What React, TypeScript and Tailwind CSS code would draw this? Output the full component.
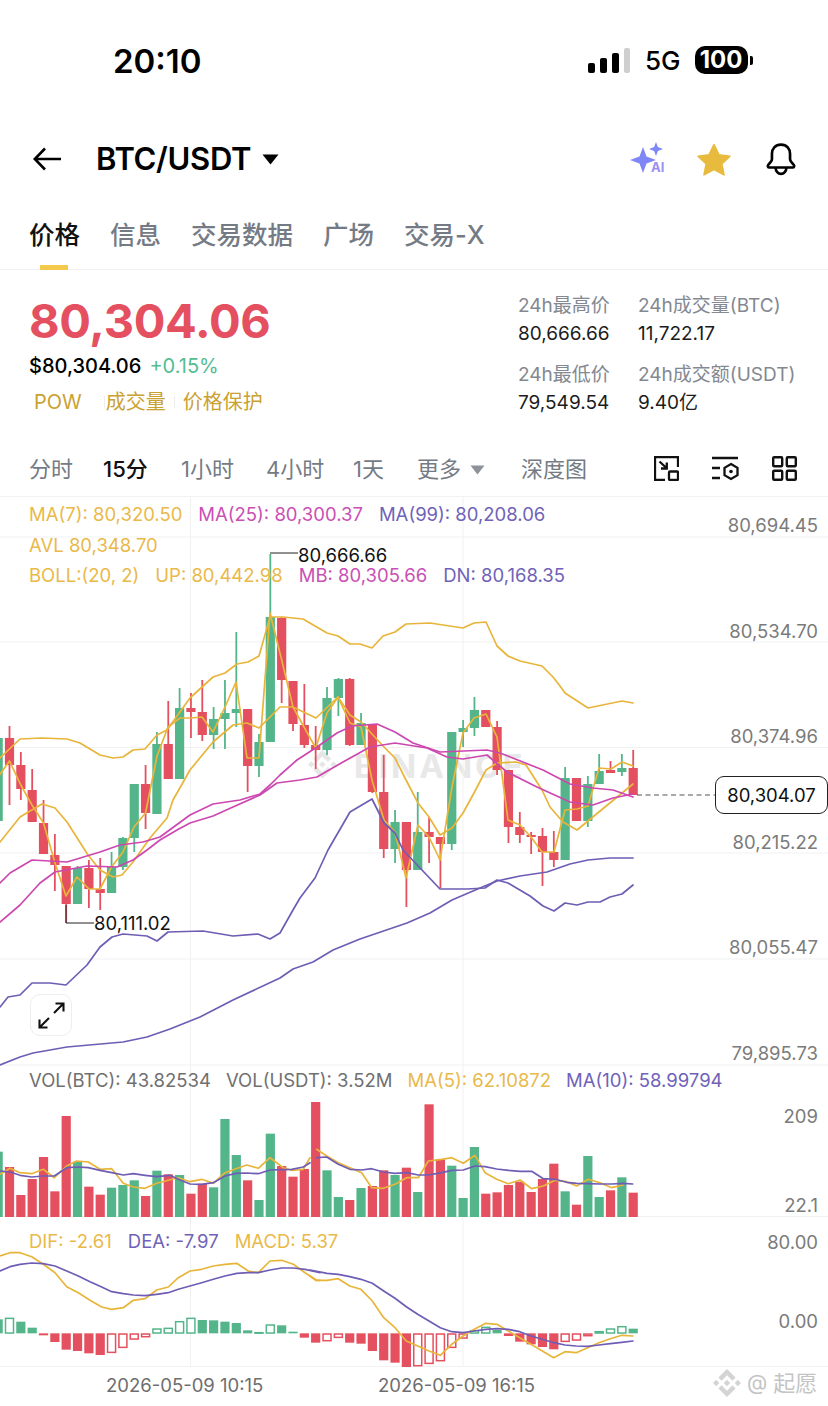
import React from "react";

const RED = "#E4505F";
const GREEN = "#54B58B";
const YEL = "#E8B53A";
const MAG = "#CC48B0";
const PUR = "#6F5DB5";
const GRID = "#F1F1F1";

const cx = (i: number) => 9.5 + 11.34 * i;
const zp = (ox: number, oy: number, s: string) =>
  s.trim().split(/\s+/).map((p) => {
    const [a, b] = p.split(",").map(Number);
    return `${(ox + a / 3).toFixed(1)},${(oy + b / 3).toFixed(1)}`;
  }).join(" ");

type C = [number, "g" | "r", number, number, number, number];
const candles: C[] = [
  [-1,"g",738,821,738,821],[0,"r",738,765,726,805],[1,"r",765,789,752,800],[2,"r",790,822,769,822],
  [3,"r",823,854,800,854],[4,"r",855,865,834,891],[5,"r",866,904,866,923],[6,"g",868,904,866,904],
  [7,"r",868,889,860,908],[8,"r",889,893,858,910],[9,"g",867,893,852,893],[10,"g",838,867,837,870],
  [11,"g",784,838,784,852],[12,"r",784,813,765,829],[13,"g",744,814,732,814],[14,"r",744,779,701,779],
  [15,"g",708,779,688,779],[16,"r",708,712,693,738],[17,"r",712,735,680,741],[18,"g",719,735,707,749],
  [19,"g",713,719,680,749],[20,"g",709,713,632,727],[21,"r",709,766,709,792],[22,"g",742,766,734,777],
  [23,"g",617,742,554,742],[24,"r",618,680,617,703],[25,"r",681,724,681,731],[26,"r",725,745,684,748],
  [27,"r",745,750,726,769],[28,"g",698,750,687,755],[29,"g",679,698,678,716],[30,"r",679,745,678,746],
  [31,"g",723,745,713,745],[32,"r",724,792,724,793],[33,"r",792,849,755,858],[34,"g",822,849,810,863],
  [35,"r",822,870,822,907],[36,"g",832,870,792,870],[37,"r",832,837,817,863],[38,"r",837,844,837,888],
  [39,"g",732,844,732,850],[40,"g",728,732,720,747],[41,"g",710,728,697,736],[42,"r",710,727,710,727],
  [43,"r",727,770,721,775],[44,"r",770,827,770,843],[45,"r",827,835,812,843],[46,"r",835,837,832,854],
  [47,"r",836,852,828,886],[48,"r",852,860,831,867],[49,"g",778,860,767,860],[50,"r",778,821,778,821],
  [51,"g",784,821,776,827],[52,"g",771,784,754,784],[53,"r",770,773,761,773],[54,"g",768,772,754,776],
  [55,"r",768,795,750,795],
];

const ma7 = "-2,777 9.5,761 20.8,785 32,805 43.5,823 55,863 66,896 77,877 89,889 100,889 111.5,867 123,852 134,827 145.5,813 157,756 168,727 180,718 191,718 202,717 213,732 225,707 236,682 247,758 259,758 270,613 281.7,660 293,707 304,727 315.7,748 327,713 338,697 350,723 361,727 372,780 384,820 395,832 406,878 418,825 429,837 440,860 452,787 463,733 474,718 486,714 497,737 508,820 520,825 531,837 542,852 554,852 565,810 577,809 588,806 599,768 611,769 622,762 633,766";
const up = "0,758 20,739 42,738 67,739 80,743 100,755 113,758 123,757 133,750 145,749 157,735 167,730 190,698 213,677 225,673 237,664 248,662 259,656 270,617 283,617 303,619 327,633 338,636 350,644 360,644 372,648 383,636 395,632 406,624 430,623 463,628 474,623 486,622 497,646 508,656 520,661 542,666 553,677 560,686 565,693 588,708 622,701 633,703";
const ma25y = "0,842 20,817 42,804 55,808 67,822 88,855 100,870 113,877 122,875 133,862 150,838 167,818 173,800 190,770 213,742 233,725 247,723 259,728 280,707 293,707 316,718 338,697 350,715 361,722 384,747 395,758 406,780 418,803 429,817 440,835 452,828 463,813 474,793 486,770 497,763 516,762 526,765 542,790 550,807 563,822 577,830 633,784";
const magA = "0,883 10,873 32,860 67,862 100,852 120,845 143,842 160,837 190,815 213,804 240,800 260,794 270,785 280,775 297,760 317,747 337,733 352,726 377,724 395,732 413,743 440,752 487,750 500,753 543,770 570,784 593,788 613,790 633,797";
const magB = "0,922 20,905 40,883 55,872 87,866 117,867 133,860 147,850 160,840 177,830 190,823 213,816 233,807 260,795 277,783 300,780 317,777 343,762 370,747 395,743 427,748 447,757 463,759 487,755 507,772 537,787 570,802 593,805 613,798 633,794";
const dn = "0,1007 8,997 20,995 32,983 50,983 66,985 87,965 100,947 112,937 123,934 147,936 157,941 168,932 203,931 233,936 258,934 270,939 280,933 293,910 300,898 315,878 328,850 350,812 372,799 384,823 395,833 403,850 440,889 467,889 485,888 497,880 508,883 530,896 543,906 554,911 565,903 577,905 588,902 600,902 610,897 622,894 633,885";
const ma99 = "0,1065 20,1057 33,1053 67,1047 123,1042 147,1037 170,1029 200,1017 233,1000 280,978 293,969 313,962 333,950 360,939 407,923 430,913 452,900 480,888 497,881 520,876 547,872 570,864 588,860 610,858 633,858";

const vols: [number, "g" | "r", number][] = [
  [-1,"g",272],[0,"r",318],[1,"r",402],[2,"r",354],[3,"r",288],[4,"r",391],[5,"r",165],[6,"g",302],[7,"r",377],[8,"r",401],
  [9,"g",380],[10,"g",372],[11,"g",358],[12,"r",405],[13,"g",329],[14,"r",340],[15,"g",342],[16,"r",398],[17,"r",368],[18,"g",379],
  [19,"g",174],[20,"g",282],[21,"r",358],[22,"g",417],[23,"g",218],[24,"r",315],[25,"r",347],[26,"r",324],[27,"r",123],[28,"g",328],
  [29,"g",408],[30,"r",417],[31,"g",381],[32,"r",375],[33,"r",328],[34,"g",342],[35,"r",320],[36,"g",393],[37,"r",130],[38,"r",295],
  [39,"g",314],[40,"g",411],[41,"g",258],[42,"r",398],[43,"r",394],[44,"r",372],[45,"r",362],[46,"r",393],[47,"r",354],[48,"r",308],
  [49,"g",391],[50,"r",431],[51,"g",285],[52,"g",408],[53,"r",388],[54,"g",349],[55,"r",395],
];
const vm5a = zp(0,1060,"0,340 30,322 60,335 95,338 130,325 163,350 200,315 230,300 265,303 300,325 335,323 370,367 400,378 435,382 470,367 505,358 535,350 570,362 605,355 640,367 675,335 708,323 740,312 775,322 810,290 850,320 875,328 910,325 930,290");
const vm5b = zp(310,1060,"20,265 50,285 85,305 120,320 155,335 185,380 220,382 255,370 290,350 325,350 355,300 395,295 425,290 460,307 495,283 525,335 560,355 595,368 630,357 665,383 700,375 735,358 770,362 800,375 835,355 870,365 905,380 940,372");
const vm10a = zp(0,1060,"0,330 30,333 60,343 95,348 130,345 163,345 200,320 235,318 265,320 300,328 335,335 370,342 400,338 435,343 470,347 510,343 535,355 570,369 605,370 640,365 675,345 708,337 740,336 775,338 810,327 850,326 875,325 910,318 930,305");
const vm10b = zp(310,1060,"20,290 50,288 85,310 120,325 155,327 185,323 220,333 255,337 290,335 325,342 355,342 395,335 425,328 460,327 495,315 525,317 560,324 595,328 630,331 665,331 700,353 735,355 770,364 800,367 835,368 870,369 905,369 940,367 968,369");

// MACD: index, colour, hollow, bar edge (zoom units from 1220)
const macd: [number, "g" | "r", boolean, number][] = [
  [-1,"g",false,295],[0,"g",true,290],[1,"g",false,302],[2,"g",false,320],[3,"r",false,343],[4,"r",false,363],[5,"r",false,386],[6,"r",false,390],
  [7,"r",false,397],[8,"r",false,402],[9,"r",true,395],[10,"r",true,380],[11,"r",true,355],[12,"r",true,348],[13,"g",true,322],[14,"g",true,320],
  [15,"g",true,300],[16,"g",true,290],[17,"g",false,297],[18,"g",false,298],[19,"g",false,302],[20,"g",false,306],[21,"g",false,328],[22,"g",true,333],
  [23,"g",true,310],[24,"g",false,313],[25,"g",false,332],[26,"r",false,350],[27,"r",false,365],[28,"r",true,360],[29,"r",true,350],[30,"r",false,365],
  [31,"r",false,368],[32,"r",false,390],[33,"r",false,418],[34,"r",false,425],[35,"r",false,440],[36,"r",true,435],[37,"r",true,428],[38,"r",true,420],
  [39,"r",true,380],[40,"r",true,352],[41,"g",true,327],[42,"g",true,317],[43,"g",false,327],[44,"r",false,345],[45,"r",false,362],[46,"r",false,370],
  [47,"r",false,378],[48,"r",false,385],[49,"r",true,362],[50,"r",true,358],[51,"r",true,345],[52,"g",true,330],[53,"g",true,322],[54,"g",true,315],[55,"g",false,323],
];
const difA = zp(0,1220,"0,105 30,95 60,95 95,107 130,130 165,155 200,197 235,215 270,238 305,258 335,265 370,260 400,238 435,233 470,207 505,198 535,170 570,150 605,145 640,135 675,130 710,127 745,150 775,155 810,120 845,118 880,130 915,155 950,178 960,178");
const difB = zp(310,1220,"0,165 17,178 51,178 85,173 119,195 153,205 187,240 221,290 255,320 289,360 323,375 357,390 391,403 425,370 459,345 493,325 527,307 561,310 595,330 629,350 663,370 697,390 731,410 765,392 799,395 833,380 867,365 901,353 935,343 969,345");
const deaA = zp(0,1220,"0,150 30,137 60,130 95,126 130,128 165,135 200,150 235,165 270,182 305,198 335,212 370,218 400,222 435,224 470,220 505,215 535,205 570,195 605,185 640,175 675,165 710,157 745,155 775,155 810,147 845,141 880,141 915,145 950,153 960,155");
const deaB = zp(310,1220,"0,147 51,157 85,160 119,167 153,175 187,187 221,210 255,232 289,257 323,280 357,300 391,320 425,332 459,335 493,330 527,325 561,323 595,325 629,332 663,345 697,355 731,365 765,372 799,375 833,376 867,372 901,368 935,364 969,360");

const Line = ({ points, color, w = 1.7 }: { points: string; color: string; w?: number }) => (
  <polyline points={points} fill="none" stroke={color} strokeWidth={w} strokeLinejoin="round" strokeLinecap="round" />
);

const BN = "M16.624 13.9202l2.7175 2.7154-7.353 7.353-7.353-7.352 2.7175-2.7164 4.6355 4.6595 4.6356-4.6595zm4.6366-4.6366L24 12l-2.7154 2.7164L18.5682 12l2.6924-2.7164zm-9.272.001l2.7163 2.6914-2.7164 2.7174v-.001L9.2721 12l2.7164-2.7154zm-9.2722-.001L5.4088 12l-2.6914 2.6924L0 12l2.7164-2.7164zM11.9885.0115l7.353 7.3329-2.7174 2.7154-4.6356-4.6356-4.6355 4.6595-2.7174-2.7154 7.353-7.3564z";

const Sparkle = ({ c, r }: { c: [number, number]; r: number }) => {
  const [x, y] = c;
  const k = r * 0.27;
  return <path d={`M${x} ${y - r}L${x + k} ${y - k}L${x + r} ${y}L${x + k} ${y + k}L${x} ${y + r}L${x - k} ${y + k}L${x - r} ${y}L${x - k} ${y - k}Z`} />;
};

function MainChart() {
  return (
    <svg className="absolute inset-0 w-full h-full" viewBox="0 497 828 569">
      {[537, 642, 747.5, 853, 959, 1065].map((y) => (
        <line key={y} x1="0" x2="828" y1={y} y2={y} stroke={GRID} strokeWidth="1" />
      ))}
      <line x1="190.5" x2="190.5" y1="497" y2="1066" stroke={GRID} />
      <line x1="463" x2="463" y1="497" y2="1066" stroke={GRID} />
      <g fill="#E6E6E6">
        <path d={BN} transform="translate(308 750) scale(1.2)" />
      </g>
      {candles.map(([i, c, bt, bb, wt, wb]) => {
        const col = c === "g" ? GREEN : RED;
        return (
          <g key={i}>
            <line x1={cx(i)} x2={cx(i)} y1={wt} y2={wb} stroke={col} strokeWidth="1.8" />
            <rect x={cx(i) - 4.6} width="9.2" y={bt} height={Math.max(bb - bt, 1.5)} fill={col} />
          </g>
        );
      })}
      <Line points={up} color={YEL} />
      <Line points={ma25y} color={YEL} />
      <Line points={ma7} color={YEL} />
      <Line points={magA} color={MAG} />
      <Line points={magB} color={MAG} />
      <Line points={dn} color={PUR} />
      <Line points={ma99} color={PUR} />
      <polyline points="270,553 298,553" fill="none" stroke="#222" strokeWidth="1" />
      <polyline points="66,905 66,923 94,923" fill="none" stroke="#222" strokeWidth="1" />
      <line x1="637" x2="715" y1="795" y2="795" stroke="#555" strokeWidth="1.2" strokeDasharray="5 3.5" />
    </svg>
  );
}

function VolChart() {
  return (
    <svg className="absolute inset-0 w-full h-full" viewBox="0 1065 828 151">
      <line x1="0" x2="828" y1="1215.5" y2="1215.5" stroke={GRID} />
      <line x1="190.5" x2="190.5" y1="1065" y2="1216" stroke={GRID} />
      <line x1="463" x2="463" y1="1065" y2="1216" stroke={GRID} />
      {vols.map(([i, c, t]) => {
        const y = 1060 + t / 3;
        return <rect key={i} x={cx(i) - 4.6} width="9.2" y={y} height={1216 - y} fill={c === "g" ? GREEN : RED} />;
      })}
      <Line points={vm5a} color={YEL} />
      <Line points={vm5b} color={YEL} />
      <Line points={vm10a} color={PUR} />
      <Line points={vm10b} color={PUR} />
    </svg>
  );
}

function MacdChart() {
  const zero = 1220 + 337 / 3;
  return (
    <svg className="absolute inset-0 w-full h-full" viewBox="0 1216 828 150">
      <line x1="0" x2="828" y1="1365.5" y2="1365.5" stroke={GRID} />
      <line x1="190.5" x2="190.5" y1="1216" y2="1366" stroke={GRID} />
      <line x1="463" x2="463" y1="1216" y2="1366" stroke={GRID} />
      {macd.map(([i, c, hollow, e]) => {
        const y = 1220 + e / 3;
        const top = Math.min(y, zero);
        const h = Math.abs(y - zero);
        const col = c === "g" ? GREEN : RED;
        return hollow ? (
          <rect key={i} x={cx(i) - 4} width="8" y={top + 0.7} height={Math.max(h - 1, 0.5)} fill="#fff" stroke={col} strokeWidth="1.5" />
        ) : (
          <rect key={i} x={cx(i) - 4.6} width="9.2" y={top} height={h} fill={col} />
        );
      })}
      <Line points={difA} color={YEL} />
      <Line points={difB} color={YEL} />
      <Line points={deaA} color={PUR} />
      <Line points={deaB} color={PUR} />
    </svg>
  );
}

const tc = "text-[#E9B949]";
const mc = "text-[#C950B4]";
const pc = "text-[#6F62B8]";

export default function App() {
  return (
    <div className="w-[828px] h-[1406px] bg-white overflow-hidden text-black font-['Inter','Noto_Sans_CJK_SC',sans-serif]">
      {/* status bar */}
      <div className="h-[124px] flex items-start pt-[43px] pl-[113px]">
        <span className="text-[33px] leading-[36px] font-semibold w-[475px]">20:10</span>
        <div className="flex items-end gap-[5px] h-[25px] mt-[5px]">
          <i className="block w-[7px] h-[10px] rounded-[2px] bg-black" />
          <i className="block w-[7px] h-[15px] rounded-[2px] bg-black" />
          <i className="block w-[7px] h-[20px] rounded-[2px] bg-black" />
          <i className="block w-[6px] h-[25px] rounded-[2px] bg-[#cfcfcf]" />
        </div>
        <span className="ml-[15px] mt-[2px] text-[26px] leading-[32px] font-medium">5G</span>
        <div className="ml-[14px] mt-[3px] flex items-center">
          <span className="w-[53px] h-[28px] rounded-[10px] bg-black text-white text-[24px] leading-[28px] font-bold text-center">100</span>
          <i className="block ml-[2px] w-[3px] h-[9px] rounded-r-[2px] bg-black" />
        </div>
      </div>
      {/* header */}
      <div className="h-[70px] flex items-center pl-[33px]">
        <svg width="28" height="24" viewBox="0 0 28 24" fill="none" stroke="#000" strokeWidth="2.6">
          <path d="M28 12H2M12 1.5 1.8 12 12 22.5" />
        </svg>
        <span className="ml-[35px] text-[31px] leading-[36px] font-semibold tracking-[-0.3px]">BTC/USDT</span>
        <svg className="ml-[11px]" width="17" height="11" viewBox="0 0 17 11"><path d="M0.5 0.5h16L8.5 10.5z" fill="#000" /></svg>
        <div className="ml-auto flex items-center mr-[31px]">
          <div className="relative w-[36px] h-[34px]">
            <svg width="36" height="34" viewBox="631 143 36 34" className="absolute inset-0">
              <g fill="#7F87F7">
                <Sparkle c={[644, 161]} r={13} />
                <Sparkle c={[657, 150]} r={7} />
              </g>
            </svg>
            <span className="absolute left-[21px] top-[19px] text-[13px] leading-[13px] font-bold text-[#9C90F2]">AI</span>
          </div>
          <svg className="ml-[31px]" width="34" height="33" viewBox="0 0 32 31">
            <path d="M16 1.5 20.6 11 31 12.4 23.4 19.6 25.4 30 16 25 6.6 30 8.6 19.6 1 12.4 11.4 11Z" fill="#E8BB3E" stroke="#E8BB3E" strokeWidth="1.5" strokeLinejoin="round" />
          </svg>
          <svg className="ml-[34px]" width="32" height="33" viewBox="0 0 30 31" fill="none" stroke="#000" strokeWidth="2.5" strokeLinejoin="round">
            <path d="M15 1.5c-5.5 0-8.5 4-8.5 8.5v5c0 2-1.5 3.5-3.5 5.5-.8.8-.3 2.5 1 2.5h22c1.3 0 1.8-1.700 1-2.500-2-2-3.500-3.500-3.500-5.500v-5c0-4.500-3-8.500-8.500-8.500z" />
            <path d="M10 23.500c0 3 2.200 5.500 5 5.500s5-2.500 5-5.500" />
          </svg>
        </div>
      </div>
      {/* tabs */}
      <div className="h-[76px] border-b border-[#f2f2f2] flex items-start pl-[29px] pt-[22px] gap-[30px] text-[25.5px] leading-[38px] text-[#757B85] font-medium">
        <div className="relative text-[#111]">
          价格
          <i className="absolute left-[11px] top-[49px] block w-[28px] h-[5px] bg-[#F5C94C]" />
        </div>
        <span>信息</span>
        <span>交易数据</span>
        <span>广场</span>
        <span>交易-X</span>
      </div>
      {/* price block */}
      <div className="h-[172px] flex">
        <div className="w-[518px] pl-[29px] pt-[21px]">
          <div className="text-[47px] leading-[60px] font-bold text-[#E4505F] tracking-[-0.3px]">80,304.06</div>
          <div className="flex gap-[8px] text-[20px] leading-[30px]">
            <span className="font-medium">$80,304.06</span>
            <span className="text-[#54BD92]">+0.15%</span>
          </div>
          <div className="flex items-center mt-[6px] pl-[5px] text-[20px] leading-[30px] text-[#C9A232]">
            <span>POW</span>
            <i className="block ml-[22px] mr-[1px] w-px h-[12px] bg-[#eeeeee]" />
            <span>成交量</span>
            <i className="block mx-[8px] w-px h-[12px] bg-[#eeeeee]" />
            <span>价格保护</span>
          </div>
        </div>
        <div className="w-[120px] pt-[22px] text-[19px] leading-[28px]">
          <div className="text-[#838891]">24h最高价</div>
          <div className="text-[#1c1c1c]">80,666.66</div>
          <div className="mt-[13px] text-[#838891]">24h最低价</div>
          <div className="text-[#1c1c1c]">79,549.54</div>
        </div>
        <div className="pt-[22px] text-[19px] leading-[28px] whitespace-nowrap">
          <div className="text-[#838891]">24h成交量(BTC)</div>
          <div className="text-[#1c1c1c]">11,722.17</div>
          <div className="mt-[13px] text-[#838891]">24h成交额(USDT)</div>
          <div className="text-[#1c1c1c]">9.40亿</div>
        </div>
      </div>
      {/* timeframes */}
      <div className="h-[55px] border-b border-[#f2f2f2] flex items-start pt-[12px] text-[22px] leading-[30px] text-[#757B85] pl-[29px]">
        <span className="w-[74px]">分时</span>
        <span className="w-[78px] text-[#111] font-medium">15分</span>
        <span className="w-[85px]">1小时</span>
        <span className="w-[87px]">4小时</span>
        <span className="w-[64px]">1天</span>
        <span>更多</span>
        <svg className="ml-[9px] mt-[11px]" width="15" height="10" viewBox="0 0 15 10"><path d="M0.500 0.500h14L7.500 9.500z" fill="#8d9199" /></svg>
        <span className="ml-[36px]">深度图</span>
        <div className="ml-auto mr-[31px] mt-[2px] flex items-center gap-[33px]">
          <svg width="25" height="25" viewBox="0 0 25 25" fill="none" stroke="#111" strokeWidth="2.3">
            <path d="M11 24H1V1h23v10" />
            <rect x="15" y="15.500" width="9" height="8.500" rx="1" />
            <path d="M5.500 5.500 12.500 12M12.800 6.500v6H7" />
          </svg>
          <svg width="27" height="25" viewBox="0 0 27 25" fill="none" stroke="#111" strokeWidth="2.3">
            <path d="M0 2h26M0 12h8M0 22h8" />
            <path d="M19 8l6.500 3.800v7.400L19 23l-6.500-3.800v-7.400z" />
            <circle cx="19" cy="15.500" r="1.800" fill="#111" stroke="none" />
          </svg>
          <svg width="25" height="25" viewBox="0 0 25 25" fill="none" stroke="#111" strokeWidth="2.4">
            <rect x="1.200" y="1.200" width="9" height="9" rx="1" />
            <rect x="14.800" y="1.200" width="9" height="9" rx="1" />
            <rect x="1.200" y="14.800" width="9" height="9" rx="1" />
            <rect x="14.800" y="14.800" width="9" height="9" rx="1" />
          </svg>
        </div>
      </div>

      {/* main chart */}
      <div className="relative h-[569px]">
        <span className="absolute left-[354px] top-[249px] text-[33px] leading-[40px] font-bold tracking-[3px] text-[#E8E8E8]">BINANCE</span>
        <MainChart />
        <div className="relative pl-[29px] pt-[2px] text-[18.5px] leading-[30.500px]">
          <div className="flex gap-[16px]">
            <span className={tc}>MA(7): 80,320.50</span>
            <span className={mc}>MA(25): 80,300.37</span>
            <span className={pc}>MA(99): 80,208.06</span>
          </div>
          <div className={tc}>AVL 80,348.70</div>
          <div className="flex gap-[16px]">
            <span className={tc}>BOLL:(20, 2)</span>
            <span className={tc}>UP: 80,442.98</span>
            <span className={mc}>MB: 80,305.66</span>
            <span className={pc}>DN: 80,168.35</span>
          </div>
        </div>
        <div className="absolute right-[10px] top-[15px] flex flex-col items-end text-[18.500px] leading-[26px] text-[#7B7B7B]">
          {["80,694.45", "80,534.70", "80,374.96", "80,215.22", "80,055.47", "79,895.73"].map((t) => (
            <span key={t} className="h-[105.500px]">{t}</span>
          ))}
        </div>
        <span className="absolute left-[298px] top-[45px] text-[18.500px] leading-[26px] text-[#111]">80,666.66</span>
        <span className="absolute left-[94px] top-[413px] text-[18.500px] leading-[26px] text-[#111]">80,111.02</span>
        <span className="absolute left-[715px] top-[279px] w-[113px] h-[38px] border border-[#222] rounded-[9px] bg-white text-center text-[18.500px] leading-[36px] text-[#111]">80,304.07</span>
        <div className="absolute left-[30px] top-[497px] w-[42px] h-[42px] bg-white border border-[#eeeeee] rounded-[10px] flex items-center justify-center">
          <svg width="27" height="27" viewBox="0 0 27 27" fill="none" stroke="#111" strokeWidth="2.100">
            <path d="M16 11 25 2M17.500 1.500H25.500V9.500" />
            <path d="M11 16 2 25M1.500 17.500V25.500H9.500" />
          </svg>
        </div>
      </div>

      {/* volume */}
      <div className="relative h-[151px]">
        <VolChart />
        <div className="relative pl-[29px] text-[18.500px] leading-[28px] flex pt-0 gap-[15px]">
          <span className="text-[#707070]">VOL(BTC): 43.82534</span>
          <span className="text-[#707070]">VOL(USDT): 3.52M</span>
          <span className={tc}>MA(5): 62.10872</span>
          <span className={pc}>MA(10): 58.99794</span>
        </div>
        <span className="absolute right-[10px] top-[37px] text-[18.500px] leading-[26px] text-[#7B7B7B]">209</span>
        <span className="absolute right-[10px] top-[126px] text-[18.500px] leading-[26px] text-[#7B7B7B]">22.1</span>
      </div>

      {/* macd */}
      <div className="relative h-[150px]">
        <MacdChart />
        <div className="relative pl-[29px] pt-[10px] text-[18.500px] leading-[28px] flex gap-[16px]">
          <span className={tc}>DIF: -2.61</span>
          <span className={pc}>DEA: -7.97</span>
          <span className={tc}>MACD: 5.37</span>
        </div>
        <span className="absolute right-[10px] top-[12px] text-[18.500px] leading-[26px] text-[#7B7B7B]">80.00</span>
        <span className="absolute right-[10px] top-[91px] text-[18.500px] leading-[26px] text-[#7B7B7B]">0.00</span>
      </div>

      {/* time axis */}
      <div className="relative h-[40px] text-[18.500px] leading-[36px] text-[#6E6E6E]">
        <span className="absolute left-[106px] top-0">2026-05-09 10:15</span>
        <span className="absolute left-[378px] top-0">2026-05-09 16:15</span>
        <div className="absolute left-[713px] top-[1px] flex items-center text-[#C4C4C4]">
          <svg width="28" height="28" viewBox="0 0 24 24" fill="#D4D4D4"><path d={BN} /></svg>
          <span className="ml-[6px] text-[21px] leading-[30px]">@</span>
          <span className="ml-[6px] text-[22px] leading-[30px]">起愿</span>
        </div>
      </div>
    </div>
  );
}
